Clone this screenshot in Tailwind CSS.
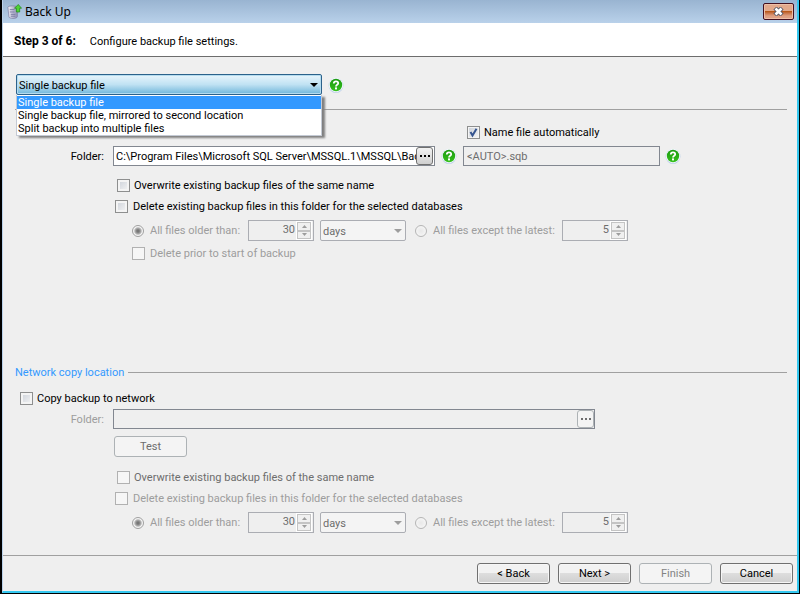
<!DOCTYPE html>
<html lang="en">
<head>
<meta charset="utf-8">
<title>Back Up</title>
<script src="https://cdn.jsdelivr.net/npm/@tailwindcss/browser@4"></script>
</head>
<body class="bg-black">
<svg class="absolute size-0" aria-hidden="true">
  <defs>
    <linearGradient id="greenFill" x1="0" y1="0" x2="0" y2="1"><stop offset="0" stop-color="#1b9a10"/><stop offset="1" stop-color="#35c01c"/></linearGradient>
    <linearGradient id="dbFill" x1="0" y1="0" x2="1" y2="0"><stop offset="0" stop-color="#f1f1f8"/><stop offset="1" stop-color="#8f8fb4"/></linearGradient>
    <symbol id="help" viewBox="0 0 16 16">
      <circle cx="8" cy="8.4" r="7.4" fill="#b4cbe6"/>
      <circle cx="8" cy="8" r="7.2" fill="#f2f7fc"/>
      <circle cx="8" cy="8" r="6.2" fill="url(#greenFill)"/>
      <path d="M5.8 6.4C5.8 3.7 10.2 3.7 10.2 6.2C10.2 7.8 8 7.6 8 9.4" fill="none" stroke="#fff" stroke-width="1.8"/>
      <rect x="7" y="10.4" width="2" height="2" fill="#fff"/>
    </symbol>
    <symbol id="down" viewBox="0 0 8 4"><path d="M0 0H8L4 4Z" fill="currentColor"/></symbol>
    <symbol id="spinUp" viewBox="0 0 5 3"><path d="M0 3H5L2.5 0Z" fill="currentColor"/></symbol>
    <symbol id="spinDown" viewBox="0 0 5 3"><path d="M0 0H5L2.5 3Z" fill="currentColor"/></symbol>
    <symbol id="dots" viewBox="0 0 10 2"><path d="M0 0h2v2H0zM4 0h2v2H4zM8 0h2v2H8z" fill="currentColor"/></symbol>
  </defs>
</svg>
<div class="flex min-h-screen flex-col border-r border-b border-l-2 border-black font-['Roboto','Liberation_Sans',sans-serif] text-[11px] leading-[15px] text-black">
 <div class="flex flex-1 flex-col border-r-2 border-b-2 border-l border-r-[#35c8f0] border-b-[#35c8f0] border-l-[#b9d1ea] bg-[#efefef]">
  <header class="flex h-[23px] items-center justify-between bg-linear-to-b from-[#99b4d1] to-[#b9d1ea] pr-[3px] pl-1">
    <div class="flex items-center gap-[3px]">
      <svg class="size-[15px]" viewBox="0 0 16 16" aria-hidden="true">
        <path d="M1 3.5C1 1.5 11 1.5 11 3.5V13.5C11 16 2 16 2 13.5Z" fill="url(#dbFill)" stroke="#77779c" stroke-width=".7"/>
        <path d="M3 6h5M3 8.500h5M4 11h5M4 13h5" stroke="#7777a0"/>
        <path d="M12 0.500L15.500 4.500H13.500V8.500H10V4.500H8Z" fill="#4fd435" stroke="#238a1c" stroke-width=".8"/>
      </svg>
      <h1 class="font-['Noto_Sans','Open_Sans',sans-serif] text-xs">Back Up</h1>
    </div>
    <button type="button" aria-label="Close" class="grid h-[17px] w-[31px] place-items-center rounded-xs border border-[#43101f] bg-linear-to-b from-[#e2a98c] from-50% via-[#b9591a] via-50% to-[#dfa184] to-80% shadow-[inset_0_0_0_1px_#edbfa8]">
      <svg class="h-[9px] w-[11px]" viewBox="0 0 11 9" aria-hidden="true"><path d="M2 1L9 8M9 1L2 8" stroke="#535666" stroke-width="4.400"/><path d="M2.500 1.500L8.500 7.500M8.500 1.500L2.500 7.500" stroke="#fff" stroke-width="2.600"/></svg>
    </button>
  </header>
  <div class="flex h-[34px] items-center gap-[14px] border-b border-[#6d6d6d] bg-white px-[11px] pt-1">
    <h2 class="text-xs leading-[15px] font-bold">Step 3 of 6:</h2>
    <p>Configure backup file settings.</p>
  </div>

  <main class="flex flex-1 flex-col justify-between pt-[17px] pr-[10px] pb-[22px] pl-3">
    <section>
      <div class="relative flex items-center gap-[6px] pl-px">
        <div class="relative w-[306px]">
          <select aria-label="Backup type" class="block h-[21px] w-full appearance-none rounded-xs border border-[#2c628b] bg-linear-to-b from-[#e8f5fc] via-[#c0e2f3] via-50% to-[#6fb6da] pt-px pl-[2px] shadow-[inset_0_0_0_1px_#b5dcef]">
            <option>Single backup file</option>
            <option>Single backup file, mirrored to second location</option>
            <option>Split backup into multiple files</option>
          </select>
          <svg class="pointer-events-none absolute top-[9px] right-1 h-1 w-2" aria-hidden="true"><use href="#down"/></svg>
          <ul role="listbox" aria-label="Backup type options" class="absolute top-full left-0 z-10 w-full border border-t-0 border-[#c4cad4] bg-white pt-px shadow-[3px_2px_2px_#808080]">
            <li role="option" aria-selected="true" class="h-[13px] bg-[#3399ff] pl-px leading-[14px] text-white">Single backup file</li>
            <li role="option" class="h-[13px] pl-px leading-[14px]">Single backup file, mirrored to second location</li>
            <li role="option" class="h-[13px] pl-px leading-[14px]">Split backup into multiple files</li>
          </ul>
        </div>
        <button type="button" aria-label="Help on backup type"><svg class="size-4"><use href="#help"/></svg></button>
      </div>
      <hr class="mt-[14px] border-[#a0a0a0]">
      <div class="mt-[15px] flex pl-[452px]">
        <label class="flex items-center gap-1">
          <span class="grid *:col-start-1 *:row-start-1">
            <input type="checkbox" checked class="size-[13px] appearance-none border border-[#8e8f8f] bg-linear-to-br from-[#cbd0d8] to-[#f6f6f6] shadow-[inset_0_0_0_1px_#f4f4f4]">
            <svg class="pointer-events-none size-[13px]" viewBox="0 0 13 13" aria-hidden="true"><path d="M3.500 6L5.500 9.500L9.500 2.800" fill="none" stroke="#35548f" stroke-width="2"/></svg>
          </span>Name file automatically</label>
      </div>
      <div class="mt-[6px] flex items-center">
        <label for="folder" class="w-[98px] pr-[9px] text-right">Folder:</label>
        <div class="flex h-5 w-[322px] items-center border border-[#828790] bg-white pr-px">
          <input id="folder" type="text" value="C:\Program Files\Microsoft SQL Server\MSSQL.1\MSSQL\Backup" class="min-w-0 flex-1 pl-[2px]">
          <button type="button" aria-label="Browse" class="grid h-[18px] w-[17px] place-items-center rounded-[3px] border border-[#707070] bg-linear-to-b from-[#f2f2f2] to-[#cfcfcf]"><svg class="h-[2px] w-[10px]"><use href="#dots"/></svg></button>
        </div>
        <button type="button" aria-label="Help on folder" class="ml-[6px]"><svg class="size-4"><use href="#help"/></svg></button>
        <input type="text" aria-label="File name" disabled value="&lt;AUTO&gt;.sqb" class="ml-[6px] h-5 w-[197px] border border-[#828790] pl-[3px] text-[#6d6d6d]">
        <button type="button" aria-label="Help on file name" class="ml-[5px]"><svg class="size-4"><use href="#help"/></svg></button>
      </div>
      <div class="mt-3 flex pl-[102px]">
        <label class="flex items-center gap-1"><input type="checkbox" class="size-[13px] appearance-none border border-[#8e8f8f] bg-linear-to-br from-[#cbd0d8] to-[#f6f6f6] shadow-[inset_0_0_0_2px_#f4f4f4]">Overwrite existing backup files of the same name</label>
      </div>
      <div class="mt-[6px] flex pl-[100px]">
        <label class="flex items-center gap-[5px]"><input type="checkbox" class="size-[13px] appearance-none border border-[#8e8f8f] bg-linear-to-br from-[#cbd0d8] to-[#f6f6f6] shadow-[inset_0_0_0_2px_#f4f4f4]">Delete existing backup files in this folder for the selected databases</label>
      </div>
      <fieldset disabled class="mt-[6px] pl-[117px] text-[#9d9d9d]">
        <div class="flex items-center">
          <label class="flex w-[116px] items-center gap-[6px] whitespace-nowrap"><input type="radio" name="age" checked class="size-3 appearance-none rounded-full border border-[#a0a0a0] bg-radial from-[#777] from-15% via-[#b5b5b5] via-45% to-[#f4f4f4] to-60%">All files older than:</label>
          <div class="flex h-[21px] w-[66px] border border-[#abadb3] pr-px">
            <input type="number" aria-label="Days" value="30" class="min-w-0 flex-1 appearance-none pr-px pb-[2px] text-right text-[#6d6d6d] [&::-webkit-inner-spin-button]:appearance-none">
            <div class="flex w-4 flex-col bg-white p-px *:grid *:flex-1 *:place-items-center *:border *:border-[#c4c4c4] *:bg-[#f0f0f0]">
              <button type="button" aria-label="Increase"><svg class="h-[3px] w-[5px]"><use href="#spinUp"/></svg></button>
              <button type="button" aria-label="Decrease"><svg class="h-[3px] w-[5px]"><use href="#spinDown"/></svg></button>
            </div>
          </div>
          <div class="relative ml-[6px] w-[86px]">
            <select aria-label="Unit" class="block h-[21px] w-full appearance-none rounded-xs border border-[#abadb3] bg-[#f4f4f4] pt-px pl-[2px] text-[#6d6d6d]"><option>days</option></select>
            <svg class="pointer-events-none absolute top-[9px] right-1 h-1 w-2" aria-hidden="true"><use href="#down"/></svg>
          </div>
          <label class="ml-[9px] flex w-[147px] items-center gap-[6px] whitespace-nowrap"><input type="radio" name="age" class="size-3 appearance-none rounded-full border border-[#b5b5b5] bg-radial from-[#e8e8e8] to-[#fafafa]">All files except the latest:</label>
          <div class="flex h-[21px] w-[66px] border border-[#abadb3] pr-px">
            <input type="number" aria-label="Files to keep" value="5" class="min-w-0 flex-1 appearance-none pr-px pb-[2px] text-right text-[#6d6d6d] [&::-webkit-inner-spin-button]:appearance-none">
            <div class="flex w-4 flex-col bg-white p-px *:grid *:flex-1 *:place-items-center *:border *:border-[#c4c4c4] *:bg-[#f0f0f0]">
              <button type="button" aria-label="Increase"><svg class="h-[3px] w-[5px]"><use href="#spinUp"/></svg></button>
              <button type="button" aria-label="Decrease"><svg class="h-[3px] w-[5px]"><use href="#spinDown"/></svg></button>
            </div>
          </div>
        </div>
        <label class="mt-[5px] flex items-center gap-[5px]"><input type="checkbox" class="size-[13px] appearance-none border border-[#b1b1b1] bg-[#f6f6f6]">Delete prior to start of backup</label>
      </fieldset>
    </section>

    <section>
      <div class="flex items-center gap-1">
        <h2 class="text-[#3399ff]">Network copy location</h2>
        <hr class="flex-1 border-[#a0a0a0]">
      </div>
      <div class="mt-[11px] flex pl-[5px]">
        <label class="flex items-center gap-1"><input type="checkbox" class="size-[13px] appearance-none border border-[#8e8f8f] bg-linear-to-br from-[#cbd0d8] to-[#f6f6f6] shadow-[inset_0_0_0_2px_#f4f4f4]">Copy backup to network</label>
      </div>
      <fieldset disabled class="mt-[3px] text-[#9d9d9d]">
        <div class="flex items-center">
          <label for="netfolder" class="w-[98px] pr-[9px] text-right">Folder:</label>
          <div class="flex h-5 w-[482px] items-center border border-[#828790]">
            <input id="netfolder" type="text" class="min-w-0 flex-1 pl-[2px]">
            <button type="button" aria-label="Browse network" class="grid h-[18px] w-[17px] place-items-center rounded-[3px] border border-[#adb2b5] bg-[#f4f4f4] text-[#6d6d6d]"><svg class="h-[2px] w-[10px]"><use href="#dots"/></svg></button>
          </div>
        </div>
        <button type="button" class="mt-[7px] ml-[99px] block h-[21px] w-[73px] rounded-[3px] border border-[#adb2b5] bg-[#f4f4f4] text-[#6d6d6d]">Test</button>
        <div class="mt-[13px] flex pl-[102px] text-[#6d6d6d]">
          <label class="flex items-center gap-1"><input type="checkbox" class="size-[13px] appearance-none border border-[#b1b1b1] bg-[#f6f6f6]">Overwrite existing backup files of the same name</label>
        </div>
        <div class="mt-[6px] flex pl-[100px]">
          <label class="flex items-center gap-[5px]"><input type="checkbox" class="size-[13px] appearance-none border border-[#b1b1b1] bg-[#f6f6f6]">Delete existing backup files in this folder for the selected databases</label>
        </div>
        <div class="mt-[6px] flex items-center pl-[117px]">
          <label class="flex w-[116px] items-center gap-[6px] whitespace-nowrap"><input type="radio" name="netage" checked class="size-3 appearance-none rounded-full border border-[#a0a0a0] bg-radial from-[#777] from-15% via-[#b5b5b5] via-45% to-[#f4f4f4] to-60%">All files older than:</label>
          <div class="flex h-[21px] w-[66px] border border-[#abadb3] pr-px">
            <input type="number" aria-label="Network days" value="30" class="min-w-0 flex-1 appearance-none pr-px pb-[2px] text-right text-[#6d6d6d] [&::-webkit-inner-spin-button]:appearance-none">
            <div class="flex w-4 flex-col bg-white p-px *:grid *:flex-1 *:place-items-center *:border *:border-[#c4c4c4] *:bg-[#f0f0f0]">
              <button type="button" aria-label="Increase"><svg class="h-[3px] w-[5px]"><use href="#spinUp"/></svg></button>
              <button type="button" aria-label="Decrease"><svg class="h-[3px] w-[5px]"><use href="#spinDown"/></svg></button>
            </div>
          </div>
          <div class="relative ml-[6px] w-[86px]">
            <select aria-label="Network unit" class="block h-[21px] w-full appearance-none rounded-xs border border-[#abadb3] bg-[#f4f4f4] pt-px pl-[2px] text-[#6d6d6d]"><option>days</option></select>
            <svg class="pointer-events-none absolute top-[9px] right-1 h-1 w-2" aria-hidden="true"><use href="#down"/></svg>
          </div>
          <label class="ml-[9px] flex w-[147px] items-center gap-[6px] whitespace-nowrap"><input type="radio" name="netage" class="size-3 appearance-none rounded-full border border-[#b5b5b5] bg-radial from-[#e8e8e8] to-[#fafafa]">All files except the latest:</label>
          <div class="flex h-[21px] w-[66px] border border-[#abadb3] pr-px">
            <input type="number" aria-label="Network files to keep" value="5" class="min-w-0 flex-1 appearance-none pr-px pb-[2px] text-right text-[#6d6d6d] [&::-webkit-inner-spin-button]:appearance-none">
            <div class="flex w-4 flex-col bg-white p-px *:grid *:flex-1 *:place-items-center *:border *:border-[#c4c4c4] *:bg-[#f0f0f0]">
              <button type="button" aria-label="Increase"><svg class="h-[3px] w-[5px]"><use href="#spinUp"/></svg></button>
              <button type="button" aria-label="Decrease"><svg class="h-[3px] w-[5px]"><use href="#spinDown"/></svg></button>
            </div>
          </div>
        </div>
      </fieldset>
    </section>
  </main>

  <footer class="flex justify-end gap-2 border-t border-[#a0a0a0] pt-[7px] pr-1 pb-[7px]">
    <button type="button" class="h-[21px] w-[73px] rounded-[3px] border border-[#707070] bg-linear-to-b from-[#f2f2f2] from-50% via-[#dddddd] via-50% to-[#cfcfcf] shadow-[inset_0_0_0_1px_#f6f6f6]">&lt; Back</button>
    <button type="button" class="h-[21px] w-[73px] rounded-[3px] border border-[#707070] bg-linear-to-b from-[#f2f2f2] from-50% via-[#dddddd] via-50% to-[#cfcfcf] shadow-[inset_0_0_0_1px_#f6f6f6]">Next &gt;</button>
    <button type="button" disabled class="h-[21px] w-[73px] rounded-[3px] border border-[#adb2b5] bg-[#f4f4f4] text-[#838383]">Finish</button>
    <button type="button" class="h-[21px] w-[73px] rounded-[3px] border border-[#707070] bg-linear-to-b from-[#f2f2f2] from-50% via-[#dddddd] via-50% to-[#cfcfcf] shadow-[inset_0_0_0_1px_#f6f6f6]">Cancel</button>
  </footer>
 </div>
</div>
</body>
</html>
